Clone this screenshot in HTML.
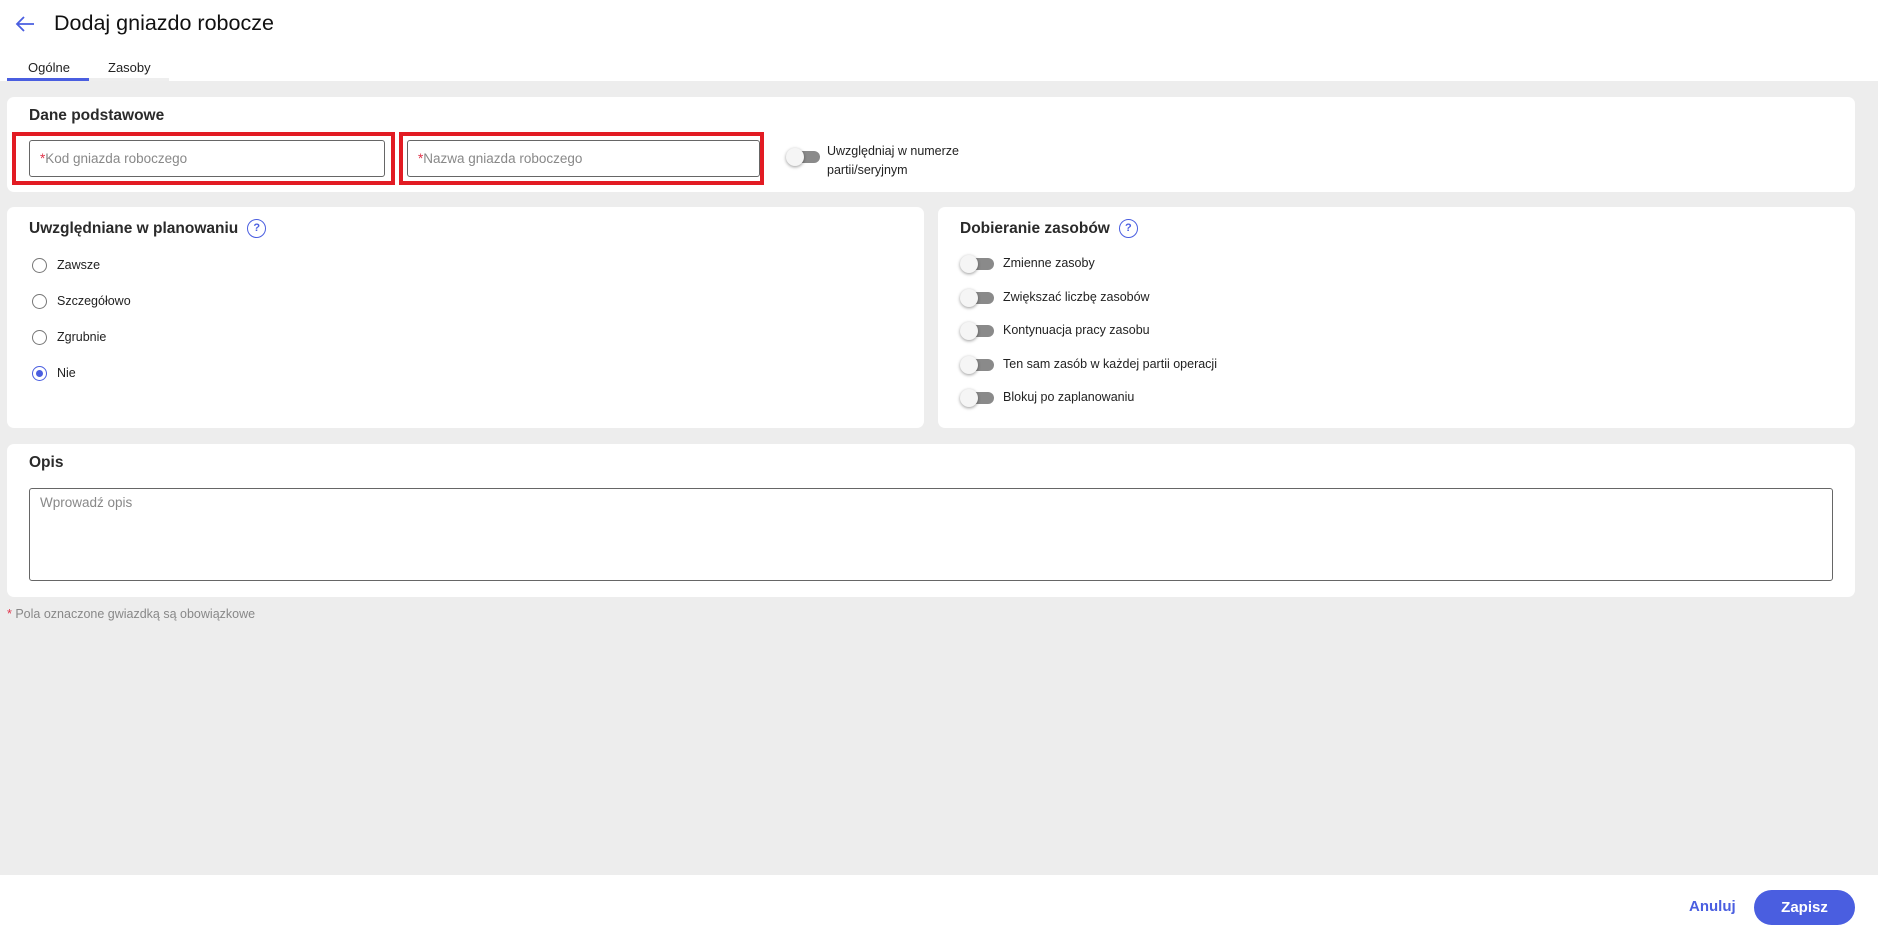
<!DOCTYPE html>
<html><head><meta charset="utf-8"><style>
*{box-sizing:border-box;margin:0;padding:0}
body{width:1878px;height:935px;background:#ededed;font-family:"Liberation Sans",sans-serif;color:#222;position:relative;overflow:hidden}
.abs{position:absolute}
.hdr{left:0;top:0;width:1878px;height:81px;background:#fff}
.card{background:#fff;border-radius:7px;position:absolute}
h3{position:absolute;font-size:15.5px;font-weight:bold;color:#2a2a2a;display:flex;align-items:center}
.inp{position:absolute;border:1px solid #666;border-radius:3px;background:#fff;font-size:13.5px;color:#888;padding-left:10px;display:flex;align-items:center}
.inp b{color:#e0334a;font-weight:normal}
.red{position:absolute;border:4px solid #e21b23}
.tg{position:absolute;width:34px;height:18px}
.tg:before{content:"";position:absolute;left:6px;top:3px;width:28px;height:12px;border-radius:6px;background:#8a8a8a}
.tg:after{content:"";position:absolute;left:0;top:0;width:18px;height:18px;border-radius:50%;background:#f5f5f5;box-shadow:0 1px 3px rgba(0,0,0,.4)}
.lb{position:absolute;font-size:12.5px;color:#222}
.rd{position:absolute;width:15px;height:15px;border:1.5px solid #777;border-radius:50%}
.rd.on{border-color:#4a5ee0}
.rd.on:after{content:"";position:absolute;left:2.5px;top:2.5px;width:7px;height:7px;border-radius:50%;background:#4a5ee0}
.q{display:inline-block;margin-left:9px;width:19px;height:19px;border:1.6px solid #4a5ee0;border-radius:50%;color:#4a5ee0;font-size:11px;font-weight:bold;text-align:center;line-height:16px}
</style></head><body>
<div class="abs hdr"></div>
<svg class="abs" style="left:14px;top:14px" width="22" height="20" viewBox="0 0 22 20"><path d="M20 10H3M10 3L3 10l7 7" fill="none" stroke="#4a5ee0" stroke-width="1.8"/></svg>
<div class="abs" style="left:54px;top:11px;font-size:21.5px;color:#111">Dodaj gniazdo robocze</div>
<div class="abs" style="left:28px;top:60px;font-size:13px;color:#222">Ogólne</div>
<div class="abs" style="left:108px;top:60px;font-size:13px;color:#222">Zasoby</div>
<div class="abs" style="left:7px;top:78px;width:82px;height:3px;background:#4a5ee0"></div>
<div class="abs" style="left:89px;top:78px;width:80px;height:3px;background:#eee"></div>

<div class="card" style="left:7px;top:97px;width:1848px;height:95px"></div>
<h3 style="left:29px;top:107px">Dane podstawowe</h3>
<div class="red" style="left:12px;top:132px;width:383px;height:53px"></div>
<div class="red" style="left:399px;top:132px;width:365px;height:53px"></div>
<div class="inp" style="left:29px;top:140px;width:356px;height:37px"><b>*</b>Kod gniazda roboczego</div>
<div class="inp" style="left:407px;top:140px;width:353px;height:37px"><b>*</b>Nazwa gniazda roboczego</div>
<div class="tg" style="left:786px;top:148px"></div>
<div class="lb" style="left:827px;top:142px;line-height:19px">Uwzględniaj w numerze<br>partii/seryjnym</div>

<div class="card" style="left:7px;top:207px;width:917px;height:221px"></div>
<h3 style="left:29px;top:219px">Uwzględniane w planowaniu<span class="q">?</span></h3>
<div class="rd" style="left:32px;top:258px"></div><div class="lb" style="left:57px;top:258px">Zawsze</div>
<div class="rd" style="left:32px;top:294px"></div><div class="lb" style="left:57px;top:294px">Szczegółowo</div>
<div class="rd" style="left:32px;top:330px"></div><div class="lb" style="left:57px;top:330px">Zgrubnie</div>
<div class="rd on" style="left:32px;top:366px"></div><div class="lb" style="left:57px;top:366px">Nie</div>

<div class="card" style="left:938px;top:207px;width:917px;height:221px"></div>
<h3 style="left:960px;top:219px">Dobieranie zasobów<span class="q">?</span></h3>
<div class="tg" style="left:960px;top:255px"></div><div class="lb" style="left:1003px;top:256px">Zmienne zasoby</div>
<div class="tg" style="left:960px;top:289px"></div><div class="lb" style="left:1003px;top:290px">Zwiększać liczbę zasobów</div>
<div class="tg" style="left:960px;top:322px"></div><div class="lb" style="left:1003px;top:323px">Kontynuacja pracy zasobu</div>
<div class="tg" style="left:960px;top:356px"></div><div class="lb" style="left:1003px;top:357px">Ten sam zasób w każdej partii operacji</div>
<div class="tg" style="left:960px;top:389px"></div><div class="lb" style="left:1003px;top:390px">Blokuj po zaplanowaniu</div>

<div class="card" style="left:7px;top:444px;width:1848px;height:153px"></div>
<h3 style="left:29px;top:454px">Opis</h3>
<div class="abs" style="left:29px;top:488px;width:1804px;height:93px;border:1px solid #666;border-radius:3px"></div>
<div class="abs" style="left:40px;top:495px;font-size:13.5px;color:#888">Wprowadź opis</div>
<div class="abs" style="left:7px;top:607px;font-size:12.5px;color:#888"><span style="color:#e0334a">*</span> Pola oznaczone gwiazdką są obowiązkowe</div>

<div class="abs" style="left:0;top:875px;width:1878px;height:60px;background:#fff"></div>
<div class="abs" style="left:1689px;top:898px;font-size:15px;font-weight:bold;color:#4a5ee0">Anuluj</div>
<div class="abs" style="left:1754px;top:890px;width:101px;height:35px;border-radius:18px;background:#4a5ee0;color:#fff;font-size:15px;font-weight:bold;text-align:center;line-height:35px">Zapisz</div>
</body></html>
